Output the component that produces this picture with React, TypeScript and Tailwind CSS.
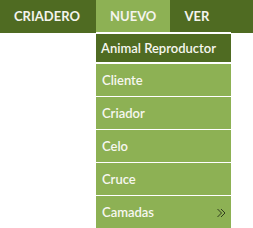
const items = ["Cliente", "Criador", "Celo", "Cruce", "Camadas"];

function DoubleChevron() {
  return (
    <svg width="9" height="10" viewBox="0 0 9 10" fill="none" stroke="#1f2614" strokeWidth="0.85">
      <path d="M0.5 1l4 4-4 4" />
      <path d="M4 1l4 4-4 4" />
    </svg>
  );
}

export default function App() {
  return (
    <div className="relative h-[228px] w-[253px] overflow-hidden bg-white font-['Lato',sans-serif]">
      <nav className="flex h-[33px] bg-[#4f6b22] text-[13px] font-bold text-[#f4f4ee]">
        <div className="flex w-[96px] items-center pl-[14px]">CRIADERO</div>
        <div className="flex items-center bg-[#8db154] px-[14px]">NUEVO</div>
        <div className="flex items-center px-[14px]">VER</div>
      </nav>

      <div className="absolute left-[96px] top-[32px] flex w-[135px] flex-col border-t border-white/80 bg-white pt-[1px] text-[13px] font-semibold text-[#f7f7f0]">
        <div className="flex h-[28px] items-center bg-[#4f6b22] px-[5px] pt-[2px]">Animal Reproductor</div>
        <div className="mt-[2px] flex flex-col gap-px">
          {items.map((label) => (
            <div key={label} className="flex h-[32px] items-center justify-between bg-[#8db154] pl-[6px] pr-[5px] pt-[2px]">
              <span>{label}</span>
              {label === "Camadas" && <DoubleChevron />}
            </div>
          ))}
        </div>
      </div>
    </div>
  );
}
